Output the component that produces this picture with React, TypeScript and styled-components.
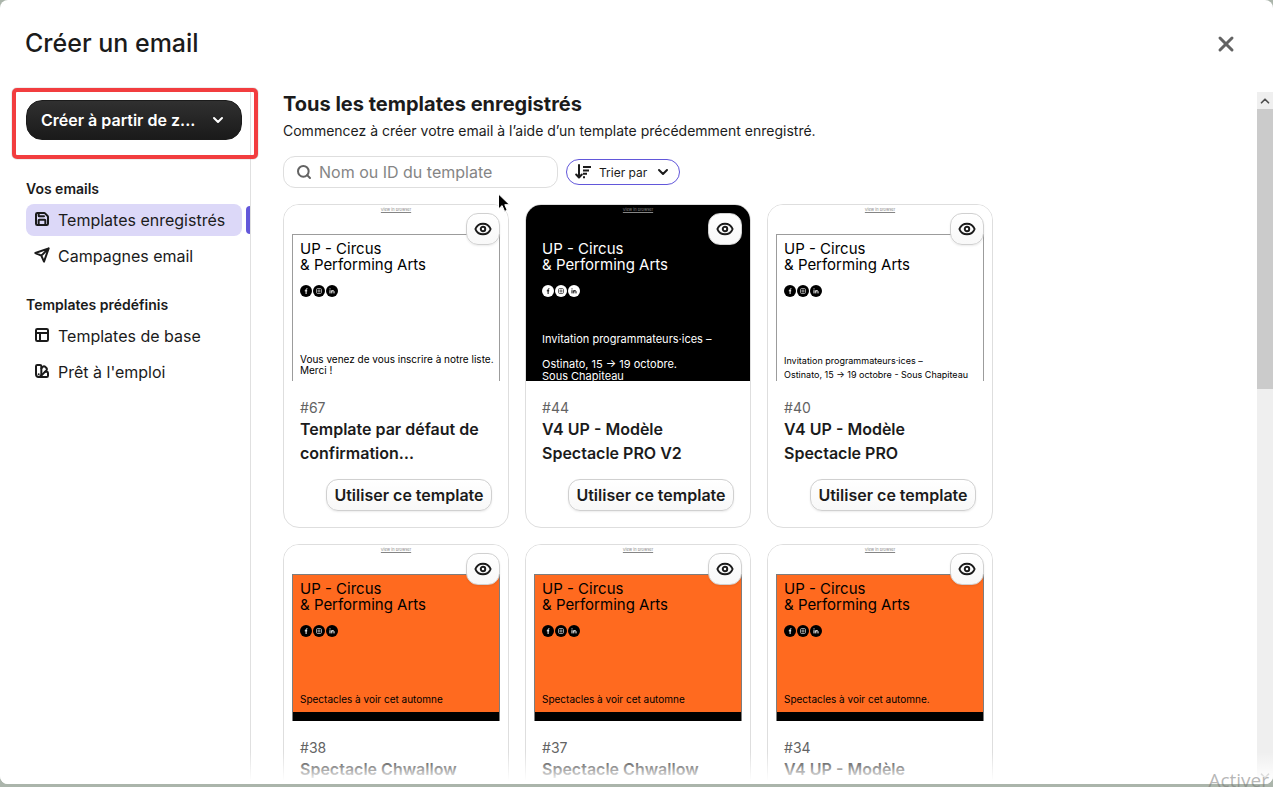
import React from 'react';
import styled, { createGlobalStyle } from 'styled-components';
import { ChevronDown, ChevronUp, Eye, PanelsTopLeft, Save, Search, SwatchBook, X } from 'lucide-react';

const GlobalStyle = createGlobalStyle`
  * { box-sizing: border-box; }
  body {
    margin: 0;
    overflow: hidden;
    background: #abb5ab;
    color: #1b1b1b;
    font-family: Inter, 'Liberation Sans', sans-serif;
    font-size: 16px;
  }
  h1, h2, h3, p, ul { margin: 0; padding: 0; }
  ul { list-style: none; }
  button, input { font: inherit; color: inherit; }
  button { cursor: pointer; }
`;

const Page = styled.div`
  position: relative;
  height: 100vh;
  padding-bottom: 3px;
  overflow: hidden;
`;

const Dialog = styled.div`
  display: flex;
  flex-direction: column;
  height: 100%;
  background: #fff;
  border-radius: 8px;
  overflow: hidden;
`;

const Header = styled.header`
  display: flex;
  align-items: center;
  justify-content: space-between;
  flex: none;
  height: 92px;
  padding: 0 35px 4px 25px;
`;

const DialogTitle = styled.h1`
  font-size: 25px;
  line-height: 32px;
  padding-bottom: 2px;
  font-weight: 500;
`;

const CloseButton = styled.button`
  display: flex;
  padding: 0;
  border: 0;
  background: none;
  color: #636363;
`;

const Body = styled.div`
  position: relative;
  display: flex;
  flex: 1;
  min-height: 0;

  &::after {
    content: '';
    position: absolute;
    inset: auto 0 0 0;
    height: 32px;
    background: linear-gradient(rgba(255, 255, 255, 0), #fff 90%);
    pointer-events: none;
  }
`;

const Sidebar = styled.nav`
  position: relative;
  flex: none;
  width: 251px;
  padding: 8px 8px 0 26px;
  border-right: 1px solid #e0e0e0;
`;

const Highlight = styled.div`
  position: absolute;
  top: -4px;
  left: 12px;
  width: 246px;
  height: 71px;
  border: 4px solid #f23d3f;
  border-radius: 5px;
  box-shadow: 0 0 1px #555;
  pointer-events: none;
`;

const PrimaryButton = styled.button`
  display: flex;
  align-items: center;
  justify-content: space-between;
  width: 100%;
  height: 40px;
  padding: 0 15px 0 14px;
  border: 1px solid #1b1b1b;
  border-radius: 16px;
  background: linear-gradient(#303030, #1a1a1a);
  color: #fff;
  font-weight: 600;
`;

const SectionTitle = styled.h3<{ $first?: boolean }>`
  margin: ${(p) => (p.$first ? 38 : 22)}px 0 4px;
  font-size: 14px;
  line-height: 22px;
  font-weight: 600;
`;

const NavList = styled.ul`
  display: grid;
  gap: 4px;
`;

const NavLink = styled.a<{ $active?: boolean }>`
  position: relative;
  display: flex;
  align-items: center;
  gap: 8px;
  height: 32px;
  padding-left: 8px;
  border-radius: 8px;
  background: ${(p) => (p.$active ? '#dcd8f8' : 'transparent')};
  color: #1b1b1b;
  text-decoration: none;
  white-space: nowrap;

  svg { margin-bottom: 2px; }

  &::after {
    content: '';
    display: ${(p) => (p.$active ? 'block' : 'none')};
    position: absolute;
    top: 2px;
    right: -8px;
    width: 4px;
    height: 28px;
    border-radius: 4px 0 0 4px;
    background: #6257da;
  }
`;

const Main = styled.main`
  flex: 1;
  min-width: 0;
  padding: 0 32px;
  overflow-y: auto;
  scrollbar-width: none;
`;

const MainTitle = styled.h2`
  font-size: 20px;
  line-height: 24px;
  font-weight: 700;
`;

const Intro = styled.p`
  margin-top: 5px;
  font-size: 14px;
  line-height: 20px;
`;

const Toolbar = styled.div`
  display: flex;
  align-items: center;
  gap: 8px;
  margin: 15px 0 16px;
`;

const SearchBox = styled.label`
  display: flex;
  align-items: center;
  gap: 7px;
  width: 275px;
  height: 32px;
  padding: 0 12px;
  border: 1px solid #dedede;
  border-radius: 12px;
  color: #636363;
`;

const SearchInput = styled.input`
  flex: 1;
  min-width: 0;
  padding: 0;
  border: 0;
  outline: 0;
  background: none;
  &::placeholder { color: #858585; opacity: 1; }
`;

const SortButton = styled.button`
  display: flex;
  align-items: center;
  gap: 8px;
  height: 26px;
  padding: 0 8px;
  border: 1px solid #6257da;
  border-radius: 13px;
  background: #fff;
  font-size: 12px;
  white-space: nowrap;
`;

const CardGrid = styled.ul`
  display: grid;
  grid-template-columns: repeat(3, 226px);
  gap: 16px;
`;

const Card = styled.li`
  position: relative;
  height: 324px;
  border: 1px solid #dedede;
  border-radius: 16px;
  overflow: hidden;
`;

type Tone = 'light' | 'dark' | 'orange';

const Preview = styled.div<{ $tone: Tone }>`
  display: flex;
  flex-direction: column;
  height: 176px;
  padding: 0 8px;
  overflow: hidden;
  background: ${(p) => (p.$tone === 'dark' ? '#000' : '#fff')};
  color: ${(p) => (p.$tone === 'dark' ? '#fff' : '#000')};
`;

const BrowserLink = styled.span`
  height: 29px;
  padding-top: 2px;
  font-size: 4px;
  line-height: 6px;
  text-align: center;
  text-decoration: underline;
  color: #858585;
`;

const Frame = styled.div<{ $tone: Tone }>`
  display: flex;
  flex-direction: column;
  flex: 1;
  min-height: 0;
  padding: 6px 7px 0;
  border: solid ${(p) => (p.$tone === 'dark' ? '#000' : p.$tone === 'orange' ? '#7d7d7d' : '#9c9c9c')};
  border-width: 1px 1px 0;
  background: ${(p) => (p.$tone === 'orange' ? '#ff6a1f' : 'transparent')};
  white-space: nowrap;
`;

const Brand = styled.p`
  font-size: 15px;
  line-height: 16px;
`;

const Socials = styled.div`
  display: flex;
  gap: 1px;
  margin-top: 12px;
`;

const Copy = styled.div<{ $top: number; $size: number; $line: number }>`
  margin-top: ${(p) => p.$top}px;
  font-size: ${(p) => p.$size}px;
  line-height: ${(p) => p.$line}px;
  white-space: pre;
`;

const FooterBand = styled.div`
  flex: none;
  height: 9px;
  margin: auto -7px 0;
  background: #000;
`;

const PreviewButton = styled.button`
  position: absolute;
  top: 8px;
  right: 8px;
  display: flex;
  align-items: center;
  justify-content: center;
  width: 34px;
  height: 32px;
  padding: 0;
  border: 1px solid #d0d0d0;
  border-radius: 12px;
  background: linear-gradient(#fff, #f8f8f8);
  box-shadow: 0 1px 2px rgba(0, 0, 0, 0.08);
`;

const CardBody = styled.div`
  display: flex;
  flex-direction: column;
  padding: 18px 16px;
`;

const CardId = styled.span`
  font-size: 14px;
  line-height: 18px;
  color: #636363;
`;

const CardTitle = styled.h3`
  height: 48px;
  font-size: 16px;
  line-height: 24px;
  font-weight: 600;
  white-space: pre-line;
`;

const UseButton = styled.button`
  align-self: flex-end;
  min-width: 166px;
  height: 32px;
  margin-top: 14px;
  padding: 0 7px;
  border: 1px solid #d0d0d0;
  border-radius: 12px;
  background: linear-gradient(#fff, #f8f8f8);
  box-shadow: 0 1px 2px rgba(0, 0, 0, 0.08);
  font-weight: 600;
  white-space: nowrap;
`;

const ScrollTrack = styled.div`
  display: flex;
  flex-direction: column;
  flex: none;
  width: 16px;
  background: #efefef;
  color: #505050;
`;

const ScrollArrow = styled.span`
  display: flex;
  align-items: center;
  justify-content: center;
  height: 17px;
`;

const ScrollThumb = styled.span`
  height: 280px;
  margin-bottom: auto;
  background: #cbcbcb;
`;

const Watermark = styled.span`
  position: absolute;
  right: 4px;
  bottom: -6px;
  color: rgba(120, 120, 120, 0.55);
  font-family: 'Open Sans', sans-serif;
  font-size: 19px;
  line-height: 26px;
`;

const Pointer = styled.svg`
  position: absolute;
  top: 193px;
  left: 497px;
`;

const PlaneIcon = () => (
  <svg width="16" height="16" viewBox="0 0 24 24" fill="none" stroke="currentColor" strokeWidth="3" strokeLinecap="round" strokeLinejoin="round" aria-hidden="true">
    <path d="M22 2 11 13M22 2l-7 20-4-9-9-4z" />
  </svg>
);

const SortIcon = () => (
  <svg width="16" height="16" viewBox="0 0 16 16" fill="none" stroke="currentColor" strokeWidth="2" aria-hidden="true">
    <path d="M4 1v12M1.2 10.5 4 13.5l2.8-3" strokeLinecap="round" strokeLinejoin="round" />
    <path d="M8 3h8M8 6.4h6M8 9.8h4M8 13.2h2" />
  </svg>
);

const SocialIcons = ({ dark }: { dark: boolean }) => {
  const disc = dark ? '#fff' : '#000';
  const mark = dark ? '#000' : '#fff';
  return (
    <Socials>
      <svg width="12" height="12" viewBox="0 0 12 12" aria-label="Facebook">
        <circle cx="6" cy="6" r="6" fill={disc} />
        <path d="M7.4 3.7h-.5q-.8 0-.8.8V9M4.8 5.8h2.4" stroke={mark} strokeWidth="1" fill="none" />
      </svg>
      <svg width="12" height="12" viewBox="0 0 12 12" aria-label="Instagram">
        <circle cx="6" cy="6" r="6" fill={disc} />
        <rect x="3.5" y="3.5" width="5" height="5" rx="1.3" stroke={mark} strokeWidth=".6" fill="none" />
        <circle cx="6" cy="6" r="1.1" stroke={mark} strokeWidth=".6" fill="none" />
      </svg>
      <svg width="12" height="12" viewBox="0 0 12 12" aria-label="LinkedIn">
        <circle cx="6" cy="6" r="6" fill={disc} />
        <path d="M4 5.2v3.2M4 3.4v1M5.8 8.4V5.2M5.8 6.6q0-1 1.1-1t1.1 1v1.8" stroke={mark} strokeWidth="1" fill="none" />
      </svg>
    </Socials>
  );
};

interface Template {
  id: number;
  title: string;
  tone: Tone;
  copy: { text: string; top: number; size: number; line: number }[];
}

const templates: Template[] = [
  {
    id: 67, title: 'Template par défaut de\nconfirmation…', tone: 'light',
    copy: [{ text: 'Vous venez de vous inscrire à notre liste.\nMerci !', top: 57, size: 10, line: 11 }],
  },
  {
    id: 44, title: 'V4 UP - Modèle\nSpectacle PRO V2', tone: 'dark',
    copy: [
      { text: 'Invitation programmateurs·ices –', top: 36, size: 11, line: 13 },
      { text: 'Ostinato, 15 → 19 octobre.\nSous Chapiteau', top: 12, size: 11, line: 12 },
    ],
  },
  {
    id: 40, title: 'V4 UP - Modèle\nSpectacle PRO', tone: 'light',
    copy: [{ text: 'Invitation programmateurs·ices –\nOstinato, 15 → 19 octobre - Sous Chapiteau', top: 57, size: 9, line: 14 }],
  },
  {
    id: 38, title: 'Spectacle Chwallow', tone: 'orange',
    copy: [{ text: 'Spectacles à voir cet automne', top: 57, size: 10, line: 11 }],
  },
  {
    id: 37, title: 'Spectacle Chwallow', tone: 'orange',
    copy: [{ text: 'Spectacles à voir cet automne', top: 57, size: 10, line: 11 }],
  },
  {
    id: 34, title: 'V4 UP - Modèle', tone: 'orange',
    copy: [{ text: 'Spectacles à voir cet automne.', top: 57, size: 10, line: 11 }],
  },
];

const TemplateCard = ({ id, title, tone, copy }: Template) => (
  <Card>
    <Preview $tone={tone}>
      <BrowserLink>View in browser</BrowserLink>
      <Frame $tone={tone}>
        <Brand>UP - Circus<br />&amp; Performing Arts</Brand>
        <SocialIcons dark={tone === 'dark'} />
        {copy.map((c) => (
          <Copy key={c.text} $top={c.top} $size={c.size} $line={c.line}>{c.text}</Copy>
        ))}
        {tone === 'orange' && <FooterBand />}
      </Frame>
    </Preview>
    <PreviewButton aria-label="Aperçu"><Eye size={18} strokeWidth={2.6} /></PreviewButton>
    <CardBody>
      <CardId>#{id}</CardId>
      <CardTitle>{title}</CardTitle>
      <UseButton>Utiliser ce template</UseButton>
    </CardBody>
  </Card>
);

export default function App() {
  return (
    <Page>
      <GlobalStyle />
      <Dialog role="dialog" aria-labelledby="dialog-title">
        <Header>
          <DialogTitle id="dialog-title">Créer un email</DialogTitle>
          <CloseButton aria-label="Fermer"><X size={24} strokeWidth={3} /></CloseButton>
        </Header>
        <Body>
          <Sidebar>
            <PrimaryButton>
              Créer à partir de z...
              <ChevronDown size={16} strokeWidth={3} />
            </PrimaryButton>
            <SectionTitle $first>Vos emails</SectionTitle>
            <NavList>
              <li><NavLink href="#enregistres" $active><Save size={16} strokeWidth={3} />Templates enregistrés</NavLink></li>
              <li><NavLink href="#campagnes"><PlaneIcon />Campagnes email</NavLink></li>
            </NavList>
            <SectionTitle>Templates prédéfinis</SectionTitle>
            <NavList>
              <li><NavLink href="#base"><PanelsTopLeft size={16} strokeWidth={3} />Templates de base</NavLink></li>
              <li><NavLink href="#emploi"><SwatchBook size={16} strokeWidth={3} />Prêt à l'emploi</NavLink></li>
            </NavList>
            <Highlight />
          </Sidebar>
          <Main>
            <MainTitle>Tous les templates enregistrés</MainTitle>
            <Intro>Commencez à créer votre email à l’aide d’un template précédemment enregistré.</Intro>
            <Toolbar>
              <SearchBox>
                <Search size={16} strokeWidth={3} />
                <SearchInput type="text" placeholder="Nom ou ID du template" aria-label="Nom ou ID du template" />
              </SearchBox>
              <SortButton><SortIcon />Trier par<ChevronDown size={16} strokeWidth={3} /></SortButton>
            </Toolbar>
            <CardGrid>
              {templates.map((t) => <TemplateCard key={t.id} {...t} />)}
            </CardGrid>
          </Main>
          <ScrollTrack aria-hidden="true">
            <ScrollArrow><ChevronUp size={14} strokeWidth={3} /></ScrollArrow>
            <ScrollThumb />
            <ScrollArrow><ChevronDown size={14} strokeWidth={3} /></ScrollArrow>
          </ScrollTrack>
        </Body>
      </Dialog>
      <Watermark>Activer</Watermark>
      <Pointer width="14" height="20" viewBox="0 0 14 20" aria-hidden="true">
        <path d="M1.5 1v15l3.6-3.4 2.5 5.8 2.6-1.1-2.4-5.6h4.7z" fill="#000" stroke="#fff" strokeWidth="1" />
      </Pointer>
    </Page>
  );
}
